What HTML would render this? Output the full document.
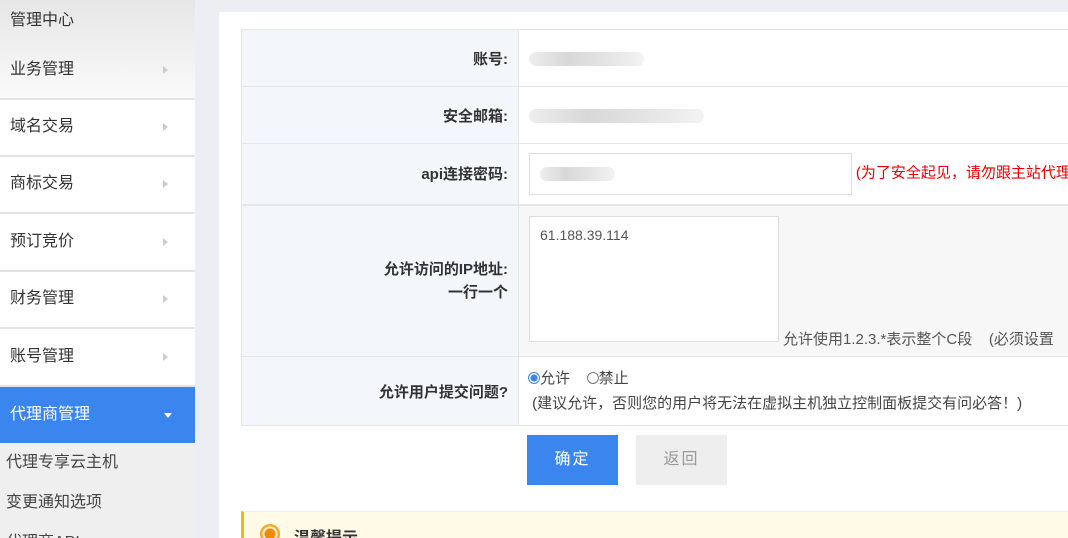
<!DOCTYPE html>
<html><head><meta charset="utf-8"><style>
*{margin:0;padding:0;box-sizing:border-box}
html,body{width:1068px;height:538px;overflow:hidden}
body{background:#eceef3;font-family:"Liberation Sans","Noto Sans CJK SC",sans-serif;font-size:14px;color:#333;position:relative}
.side{position:absolute;left:0;top:0;width:195px;height:538px;background:#fff}
.top{position:absolute;left:0;top:0;width:195px;height:98px;background:linear-gradient(#e6e6e6,#f2f2f2 60%,#fafafa)}
.it{position:absolute;left:0;width:195px;height:58px;border-bottom:2px solid #e4e4e4;font-size:16px;line-height:56px;padding-left:10px;color:#333}
.it:after{content:"";position:absolute;right:27px;top:24px;border-left:5px solid #ccc;border-top:4px solid transparent;border-bottom:4px solid transparent}
.act{background:#3b86ee;color:#fff;border:none}
.act:after{border:none;border-top:5px solid #fff;border-left:4px solid transparent;border-right:4px solid transparent;top:26px;right:23px}
.sub{position:absolute;left:0;top:443px;width:195px;height:95px;background:#efefef}
.sub div{font-size:16px;color:#444;padding-left:6px;height:40px;line-height:40px}
.panel{position:absolute;left:219px;top:12px;width:849px;height:526px;background:#fff;overflow:hidden}
table{position:absolute;left:22px;top:17px;border-collapse:collapse;width:840px}
td{border:1px solid #e6e6e6}
td.l{width:277px;background:#f3f6fa;text-align:right;font-weight:bold;padding-right:10px;font-size:15px;color:#333}
.blur{display:inline-block;height:14px;background:linear-gradient(90deg,#eee,#d8d8d8,#e4e4e4,#f3f3f3);border-radius:7px;vertical-align:middle}
.btn{position:absolute;top:423px;width:91px;height:50px;line-height:50px;text-align:center;font-size:16px;letter-spacing:2px}
</style></head><body>
<div class="side">
<div class="top"></div>
<div style="position:absolute;left:10px;top:6px;font-size:16px">管理中心</div>
<div class="it" style="top:42px;background:transparent">业务管理</div>
<div class="it" style="top:99px">域名交易</div>
<div class="it" style="top:156px">商标交易</div>
<div class="it" style="top:214px">预订竞价</div>
<div class="it" style="top:271px">财务管理</div>
<div class="it" style="top:329px">账号管理</div>
<div class="it act" style="top:387px;height:56px">代理商管理</div>
<div class="sub"><div>代理专享云主机</div><div>变更通知选项</div><div>代理商API</div></div>
</div>
<div class="panel">
<table>
<tr style="height:57px"><td class="l">账号:</td><td style="padding-left:10px"><span class="blur" style="width:115px"></span></td></tr>
<tr style="height:57px"><td class="l">安全邮箱:</td><td style="padding-left:10px"><span class="blur" style="width:175px"></span></td></tr>
<tr style="height:61px"><td class="l">api连接密码:</td><td style="padding-left:10px;white-space:nowrap"><span style="display:inline-block;width:323px;height:42px;border:1px solid #ddd;vertical-align:middle;padding:13px 10px"><span class="blur" style="width:75px;display:block"></span></span> <span style="color:#e00;font-size:15px">(为了安全起见，请勿跟主站代理</span></td></tr>
<tr style="height:152px;border-top:2px solid #e6e6e6"><td class="l" style="line-height:23px">允许访问的IP地址:<br>一行一个</td><td style="background:#f7f7f7;padding-left:10px;white-space:nowrap;position:relative"><span style="position:absolute;left:10px;top:10px;width:250px;height:126px;border:1px solid #ddd;background:#fff;padding:10px 10px;font-size:14px;color:#555">61.188.39.114</span><span style="position:absolute;left:264px;top:122px;font-size:15px;color:#555">允许使用1.2.3.*表示整个C段&nbsp;&nbsp;&nbsp;&nbsp;(必须设置</span></td></tr>
<tr style="height:69px"><td class="l">允许用户提交问题?</td><td style="padding-left:9px;font-size:15px;color:#444;line-height:25px;white-space:nowrap"><span style="display:inline-block;width:12px;height:12px;border:1px solid #3b86ee;border-radius:50%;background:radial-gradient(#3b86ee 45%,#fff 55%);vertical-align:-1px"></span>允许&nbsp;&nbsp;&nbsp;&nbsp;<span style="display:inline-block;width:12px;height:12px;border:1px solid #777;border-radius:50%;vertical-align:-1px"></span>禁止<br>&nbsp;(建议允许，否则您的用户将无法在虚拟主机独立控制面板提交有问必答！)</td></tr>
</table>
<div class="btn" style="left:308px;background:#3b86ee;color:#fff">确定</div>
<div class="btn" style="left:417px;background:#eee;color:#999">返回</div>
<div style="position:absolute;left:22px;top:499px;width:830px;height:40px;background:#fffbe6;border-left:3px solid #f5b800;border-top:1px solid #eee"><span style="position:absolute;left:16px;top:12px;width:20px;height:20px;border-radius:50%;background:radial-gradient(#f08c00 35%,#fff 45%,#f5a623 60%)"></span><span style="position:absolute;left:50px;top:12px;font-size:16px;font-weight:bold">温馨提示</span></div>
</div>
</body></html>
